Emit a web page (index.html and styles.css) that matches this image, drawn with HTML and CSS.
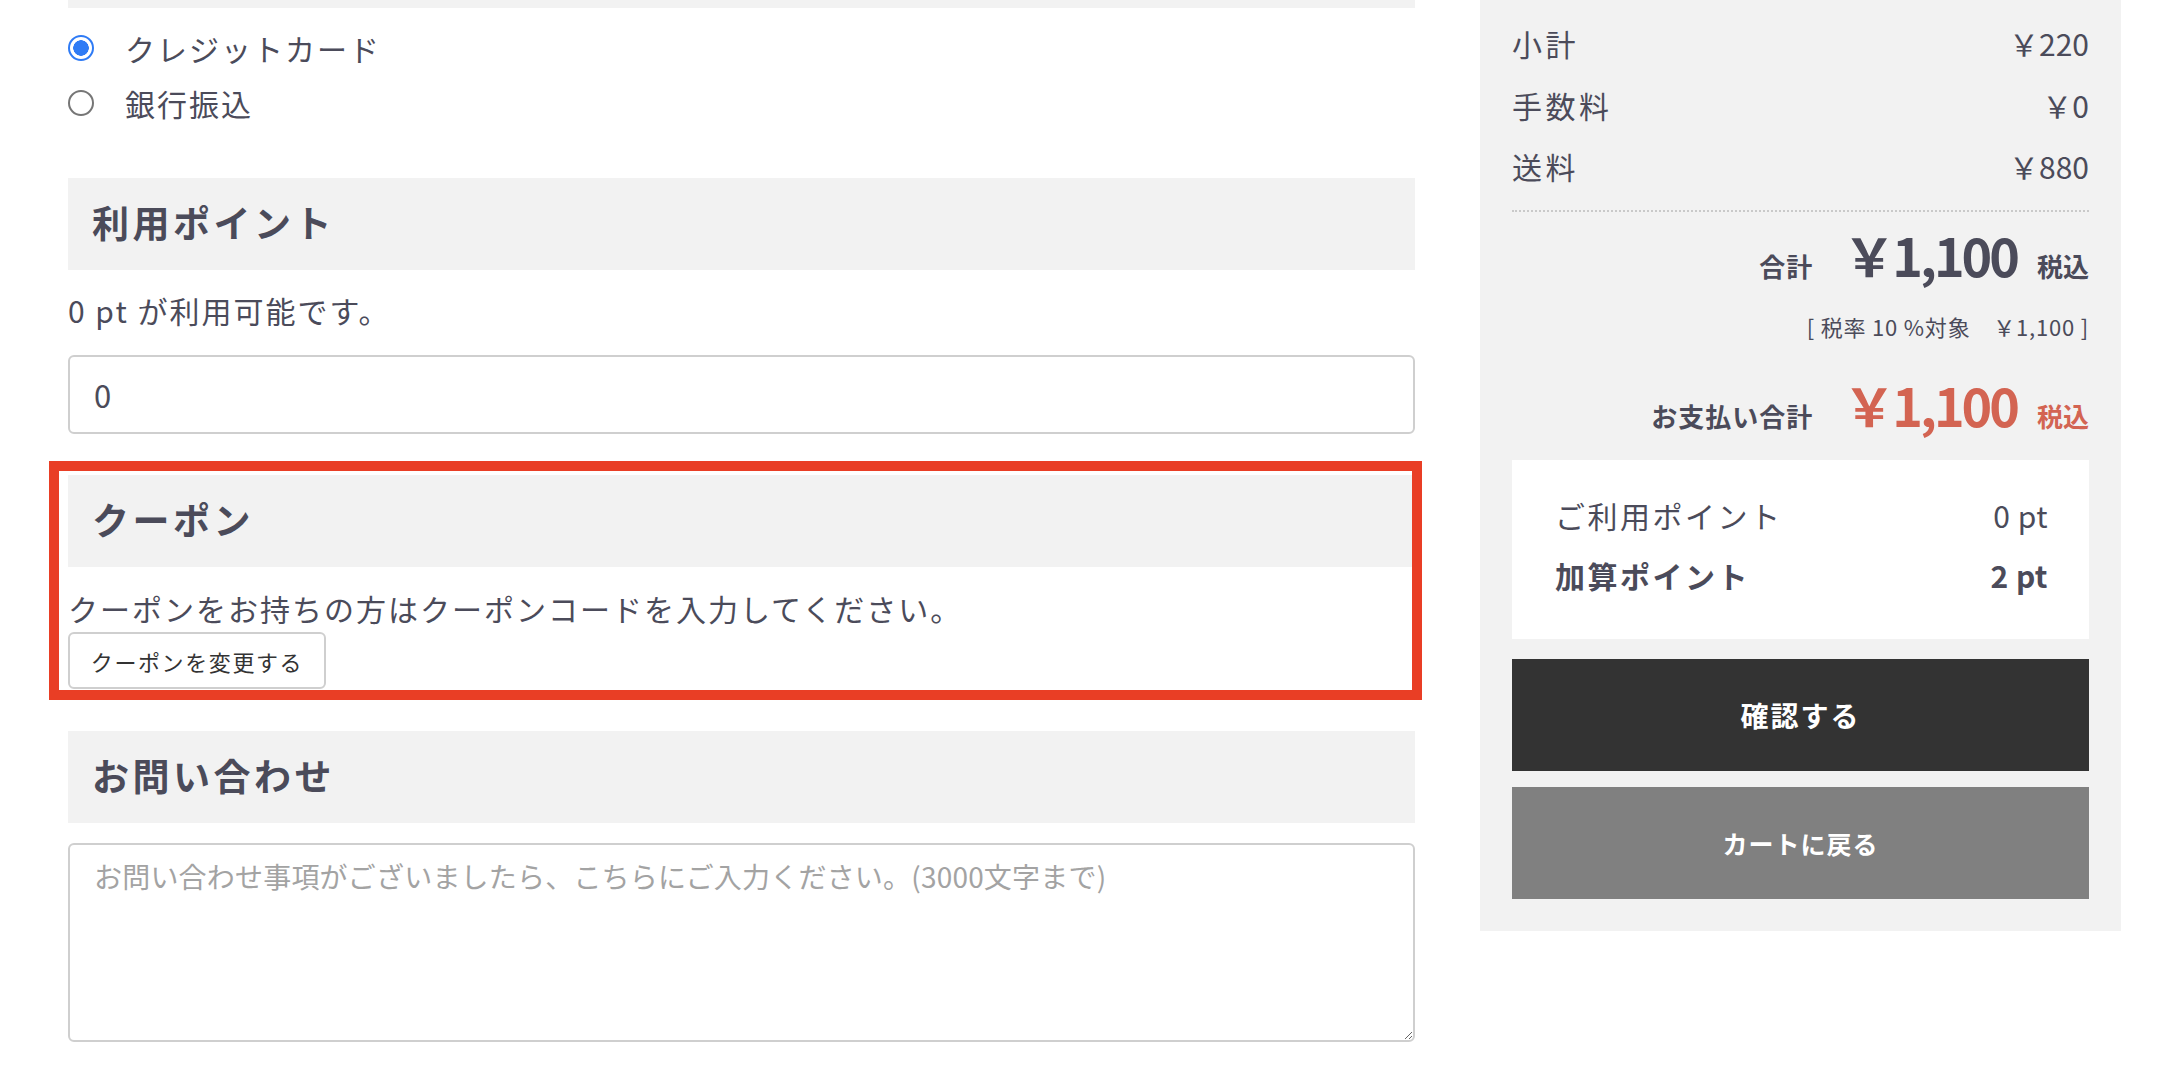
FILE: index.html
```html
<!DOCTYPE html>
<html lang="ja">
<head>
<meta charset="utf-8">
<title>注文手続き</title>
<link rel="stylesheet" href="styles.css">
</head>
<body>
<div class="page">
  <main class="main">
    <div class="prev-bar"></div>
    <div class="radios">
      <label class="radio-row"><input type="radio" name="pay" class="radio" checked><span>クレジットカード</span></label>
      <label class="radio-row"><input type="radio" name="pay" class="radio"><span>銀行振込</span></label>
    </div>

    <h2 class="sec-head sec-points">利用ポイント</h2>
    <p class="note">0 pt が利用可能です。</p>
    <input class="text-input" type="text" value="0">

    <section class="coupon">
      <h2 class="sec-head">クーポン</h2>
      <p class="coupon-desc">クーポンをお持ちの方はクーポンコードを入力してください。</p>
      <button class="coupon-btn" type="button">クーポンを変更する</button>
    </section>

    <h2 class="sec-head sec-contact">お問い合わせ</h2>
    <textarea class="textarea" placeholder="お問い合わせ事項がございましたら、こちらにご入力ください。(3000文字まで)"></textarea>
  </main>

  <aside class="side">
    <div class="sum-row"><span class="sum-label">小計</span><span class="sum-val">￥220</span></div>
    <div class="sum-row"><span class="sum-label">手数料</span><span class="sum-val">￥0</span></div>
    <div class="sum-row"><span class="sum-label">送料</span><span class="sum-val">￥880</span></div>
    <div class="dots"></div>
    <div class="total-row"><span class="total-label">合計</span><span class="total-amt">￥1,100</span><span class="total-tax">税込</span></div>
    <div class="tax-note">[ 税率 10 %対象　￥1,100 ]</div>
    <div class="total-row pay-row"><span class="total-label">お支払い合計</span><span class="total-amt red">￥1,100</span><span class="total-tax red">税込</span></div>
    <div class="points-box">
      <div class="pt-row"><span>ご利用ポイント</span><span>0 pt</span></div>
      <div class="pt-row bold"><span>加算ポイント</span><span>2 pt</span></div>
    </div>
    <button class="btn-confirm" type="button">確認する</button>
    <button class="btn-back" type="button">カートに戻る</button>
  </aside>
</div>
</body>
</html>
```

FILE: styles.css
```css
* { box-sizing: border-box; }

html, body {
  margin: 0;
  padding: 0;
  background: #ffffff;
}

body {
  font-family: "Noto Sans CJK JP", "Noto Sans", sans-serif;
  color: #4b4b5a;
  width: 2182px;
  height: 1092px;
  overflow: hidden;
}

.page {
  display: flex;
  gap: 65px;
  padding: 0 61px 0 68px;
  align-items: flex-start;
}

.main {
  flex: 0 0 1347px;
  display: flex;
  flex-direction: column;
}

.prev-bar {
  height: 8px;
  background: #f2f2f2;
}

.radios {
  padding-top: 12px;
  display: flex;
  flex-direction: column;
}

.radio-row {
  display: flex;
  align-items: center;
  height: 55px;
  font-size: 30px;
  letter-spacing: 2px;
}

.radio {
  appearance: none;
  -webkit-appearance: none;
  width: 26px;
  height: 26px;
  margin: 0 31px 0 0;
  border: 2px solid #767676;
  border-radius: 50%;
  background: #fff;
  flex: 0 0 auto;
}

.radio:checked {
  border: 2.5px solid #2f7bf5;
  background: radial-gradient(circle, #2f7bf5 0 7.5px, #fff 8px);
}

.sec-head {
  margin: 0;
  height: 92px;
  background: #f2f2f2;
  display: flex;
  align-items: center;
  padding-left: 24px;
  padding-bottom: 5px;
  font-size: 37px;
  font-weight: 700;
  letter-spacing: 3.5px;
  color: #4b4b5a;
}

.sec-points { margin-top: 48px; }

.note {
  margin: 18px 0 0;
  font-size: 30px;
  line-height: 44px;
  letter-spacing: 2px;
}

.text-input {
  margin-top: 23px;
  height: 79px;
  width: 100%;
  border: 2px solid #cfcfcf;
  border-radius: 6px;
  padding: 0 24px;
  font-family: "Noto Sans CJK JP", sans-serif;
  font-size: 31px;
  color: #4b4b5a;
  background: #fff;
}

.coupon {
  position: relative;
  margin-top: 41px;
  display: flex;
  flex-direction: column;
  align-items: flex-start;
}

.coupon .sec-head { width: 100%; }

.coupon::after {
  content: "";
  position: absolute;
  top: -14px;
  left: -19px;
  right: -7px;
  bottom: -11px;
  border: 10px solid #e93e25;
  pointer-events: none;
}

.coupon-desc {
  margin: 19px 0 0;
  font-size: 30px;
  line-height: 44px;
  letter-spacing: 2px;
}

.coupon-btn {
  margin-top: 2px;
  height: 57px;
  width: 258px;
  border: 2px solid #cfcfcf;
  border-radius: 6px;
  background: #fff;
  font-family: "Noto Sans CJK JP", sans-serif;
  font-size: 22px;
  letter-spacing: 1.6px;
  color: #333;
  padding: 0;
}

.sec-contact { margin-top: 42px; }

.textarea {
  margin-top: 20px;
  height: 199px;
  width: 100%;
  border: 2px solid #cfcfcf;
  border-radius: 6px;
  padding: 11px 24px;
  font-family: "Noto Sans CJK JP", sans-serif;
  font-size: 28px;
  line-height: 1.45;
  letter-spacing: 0.2px;
  color: #4b4b5a;
  resize: vertical;
  background: #fff;
}

.textarea::placeholder { color: #a3a3a3; }

/* Sidebar */
.side {
  flex: 0 0 641px;
  background: #f2f2f2;
  padding: 12.5px 32px 32px;
  display: flex;
  flex-direction: column;
}

.sum-row {
  display: flex;
  justify-content: space-between;
  align-items: center;
  height: 61.5px;
  font-size: 30px;
}

.sum-label { letter-spacing: 3.5px; }

.dots {
  margin-top: 13px;
  border-top: 2px dotted #c9c9c9;
}

.total-row {
  display: flex;
  justify-content: flex-end;
  align-items: baseline;
  margin-top: 13px;
  line-height: 60px;
  font-weight: 700;
}

.total-label {
  font-size: 26px;
  letter-spacing: 1px;
}

.total-amt {
  font-size: 52px;
  letter-spacing: -3px;
  margin-left: 30px;
}

.total-tax {
  font-size: 26px;
  margin-left: 20px;
}

.red { color: #d36452; }

.tax-note {
  margin-top: 15px;
  text-align: right;
  font-size: 22px;
  line-height: 30px;
  letter-spacing: 0.8px;
}

.pay-row { margin-top: 34px; }

.points-box {
  margin-top: 14px;
  background: #ffffff;
  padding: 24.5px 41px 34.5px 43px;
}

.pt-row {
  display: flex;
  justify-content: space-between;
  height: 60px;
  align-items: center;
  font-size: 30px;
  letter-spacing: 2.5px;
}

.pt-row span:last-child { letter-spacing: 0.5px; }

.pt-row.bold { font-weight: 700; }

.btn-confirm,
.btn-back {
  display: block;
  width: 100%;
  height: 112px;
  border: none;
  color: #fff;
  font-family: "Noto Sans CJK JP", sans-serif;
  font-weight: 700;
  padding: 0;
}

.btn-confirm {
  margin-top: 20px;
  background: #333333;
  font-size: 28px;
  letter-spacing: 2px;
}

.btn-back {
  margin-top: 16px;
  background: #808080;
  font-size: 25px;
  letter-spacing: 1px;
}
```
